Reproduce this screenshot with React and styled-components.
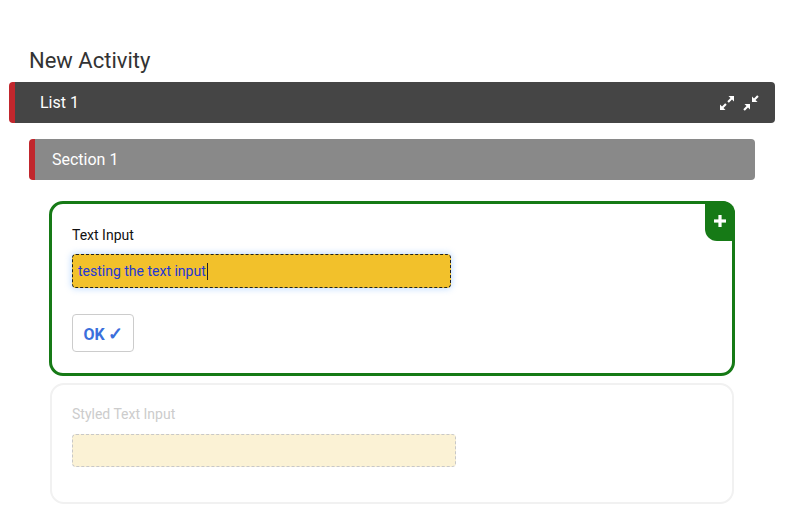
import styled, { createGlobalStyle } from "styled-components";

const GlobalStyle = createGlobalStyle`
    body {
        margin: 0;
        background: #ffffff;
        font-family: Roboto, "Liberation Sans", sans-serif;
    }
`

const Page = styled.div`
    width: 789px;
    padding: 47px 14px 0 9px;
    box-sizing: border-box;
`

const Title = styled.h1`
    margin: 0 0 7px 20px;
    font-size: 22px;
    font-weight: 400;
    color: #333333;
    line-height: 28px;
`

const Bar = styled.div`
    height: 41px;
    display: flex;
    align-items: center;
    justify-content: space-between;
    box-sizing: border-box;
    padding: 0 16px 0 ${(p) => p.$indent}px;
    background: ${(p) => p.$bg};
    border-left: 6px solid #c1272d;
    border-radius: 4px;
    color: #ffffff;
    font-size: 16px;
`

const Nest = styled.div`
    padding: ${(p) => p.$top}px 20px 0 20px;
`

const BarTools = styled.div`
    display: flex;
    gap: 8px;
    align-items: center;
`

const Card = styled.div`
    position: relative;
    box-sizing: border-box;
    height: ${(p) => p.$h}px;
    margin: ${(p) => p.$m};
    padding: ${(p) => p.$pad};
    border: ${(p) => (p.$active ? "3px solid #167a16" : "2px solid #f1f1f1")};
    border-radius: 14px;
`

const Badge = styled.div`
    position: absolute;
    top: -3px;
    right: -3px;
    width: 30px;
    height: 40px;
    background: #167a16;
    border-radius: 0 12px 0 12px;
    display: flex;
    align-items: center;
    justify-content: center;
`

const Label = styled.div`
    font-size: 14px;
    line-height: 18px;
    color: ${(p) => (p.$muted ? "#cccccc" : "#111111")};
    margin-bottom: ${(p) => p.$gap}px;
`

const Field = styled.div`
    box-sizing: border-box;
    width: ${(p) => p.$w}px;
    height: ${(p) => p.$h}px;
    display: flex;
    align-items: center;
    padding: 0 5px;
    border-radius: 4px;
    border: 1px dashed ${(p) => (p.$muted ? "#c8c8c8" : "#222222")};
    background: ${(p) => (p.$muted ? "#fbf2d5" : "#f2c12b")};
    box-shadow: ${(p) => (p.$muted ? "none" : "0 0 6px 1px rgba(120, 180, 255, 0.45)")};
    color: #2337d6;
    font-size: 14px;
`

const Caret = styled.span`
    display: inline-block;
    width: 1px;
    height: 17px;
    background: #222;
    margin-left: 1px;
`

const OkButton = styled.button`
    margin-top: 26px;
    width: 62px;
    height: 38px;
    background: #ffffff;
    border: 1px solid #cccccc;
    border-radius: 4px;
    color: #3b6fdc;
    font-family: Roboto, "Liberation Sans", sans-serif;
    font-size: 16px;
    font-weight: 700;
    padding: 0;
`

const Check = styled.span`
    font-size: 18px;
    margin-left: 3px;
`

const Expand = () => (
    <svg width="16" height="16" viewBox="0 0 16 16" fill="#fff">
        <path d="M9.5 1h5.5v5.5l-2-2-3.2 3.2-1.5-1.5 3.2-3.2z" />
        <path d="M6.5 15H1V9.5l2 2 3.2-3.2 1.5 1.5-3.2 3.2z" />
    </svg>
)

const Compress = () => (
    <svg width="16" height="16" viewBox="0 0 16 16" fill="#fff">
        <path d="M9 7V1.5l2 2 3.2-3.2 1.5 1.5-3.2 3.2 2 2z" />
        <path d="M7 9v5.5l-2-2-3.2 3.2-1.5-1.5 3.2-3.2-2-2z" />
    </svg>
)

const Plus = () => (
    <svg width="12" height="12" viewBox="0 0 12 12" fill="#fff">
        <rect x="4.4" y="0" width="3.2" height="12" />
        <rect x="0" y="4.4" width="12" height="3.2" />
    </svg>
)

const App = () => {
    return (<>
        <GlobalStyle />
        <Page>
            <Title>New Activity</Title>
            <Bar $bg="#454545" $indent={25}>
                <span>List 1</span>
                <BarTools>
                    <Expand />
                    <Compress />
                </BarTools>
            </Bar>
            <Nest $top={16}>
                <Bar $bg="#898989" $indent={17}>
                    <span>Section 1</span>
                </Bar>
                <Nest $top={21}>
                    <Card $active $h={175} $m="0" $pad="22px 20px 0 20px">
                        <Badge><Plus /></Badge>
                        <Label $gap={10}>Text Input</Label>
                        <Field $w={379} $h={34}>
                            testing the text input<Caret />
                        </Field>
                        <OkButton>OK<Check>✓</Check></OkButton>
                    </Card>
                    <Card $h={121} $m="7px 1px 0 1px" $pad="20px 20px 0 20px">
                        <Label $muted $gap={11}>Styled Text Input</Label>
                        <Field $muted $w={384} $h={33} />
                    </Card>
                </Nest>
            </Nest>
        </Page>
    </>
    )
}

export default App;
